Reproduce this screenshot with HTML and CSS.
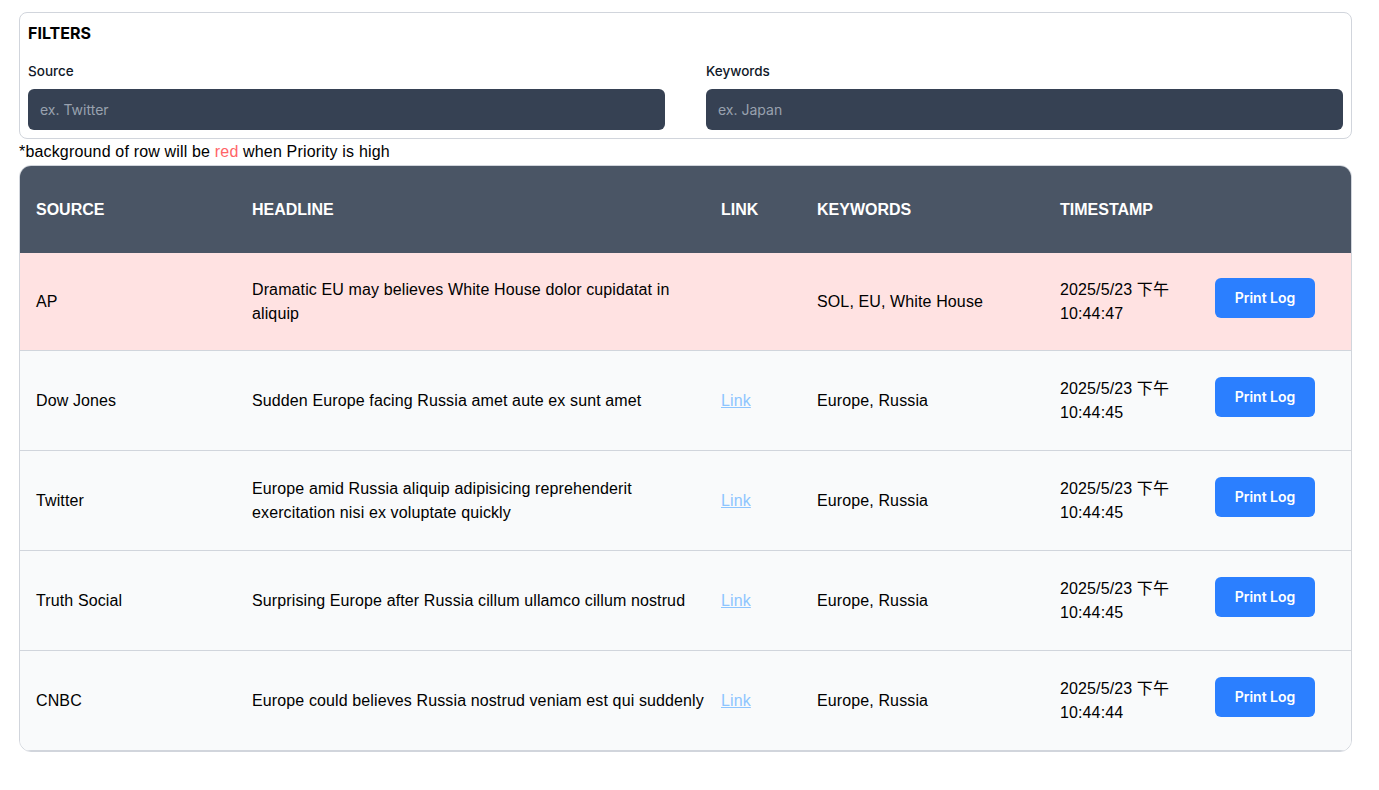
FILE: index.html
```html
<!DOCTYPE html>
<html lang="en">
<head>
<meta charset="utf-8">
<title>News Feed</title>
<link rel="stylesheet" href="styles.css">
</head>
<body>
<div class="page">
  <section class="filters">
    <h2 class="filters-title">FILTERS</h2>
    <div class="filters-grid">
      <div class="field">
        <label class="field-label">Source</label>
        <input class="field-input" type="text" placeholder="ex. Twitter">
      </div>
      <div class="field">
        <label class="field-label">Keywords</label>
        <input class="field-input" type="text" placeholder="ex. Japan">
      </div>
    </div>
  </section>
  <p class="note">*background of row will be <span class="note-red">red</span> when Priority is high</p>
  <div class="table-wrap">
    <table class="news">
      <thead>
        <tr>
          <th class="c-source">SOURCE</th>
          <th class="c-headline">HEADLINE</th>
          <th class="c-link">LINK</th>
          <th class="c-keywords">KEYWORDS</th>
          <th class="c-time">TIMESTAMP</th>
          <th class="c-action"></th>
        </tr>
      </thead>
      <tbody>
        <tr class="row high">
          <td>AP</td>
          <td class="headline">Dramatic EU may believes White House dolor cupidatat in aliquip</td>
          <td></td>
          <td>SOL, EU, White House</td>
          <td>2025/5/23 下午 10:44:47</td>
          <td><button class="btn">Print Log</button></td>
        </tr>
        <tr class="row">
          <td>Dow Jones</td>
          <td class="headline">Sudden Europe facing Russia amet aute ex sunt amet</td>
          <td><a class="link" href="#">Link</a></td>
          <td>Europe, Russia</td>
          <td>2025/5/23 下午 10:44:45</td>
          <td><button class="btn">Print Log</button></td>
        </tr>
        <tr class="row">
          <td>Twitter</td>
          <td class="headline">Europe amid Russia aliquip adipisicing reprehenderit exercitation nisi ex voluptate quickly</td>
          <td><a class="link" href="#">Link</a></td>
          <td>Europe, Russia</td>
          <td>2025/5/23 下午 10:44:45</td>
          <td><button class="btn">Print Log</button></td>
        </tr>
        <tr class="row">
          <td>Truth Social</td>
          <td class="headline">Surprising Europe after Russia cillum ullamco cillum nostrud</td>
          <td><a class="link" href="#">Link</a></td>
          <td>Europe, Russia</td>
          <td>2025/5/23 下午 10:44:45</td>
          <td><button class="btn">Print Log</button></td>
        </tr>
        <tr class="row">
          <td>CNBC</td>
          <td class="headline">Europe could believes Russia nostrud veniam est qui suddenly</td>
          <td><a class="link" href="#">Link</a></td>
          <td>Europe, Russia</td>
          <td>2025/5/23 下午 10:44:44</td>
          <td><button class="btn">Print Log</button></td>
        </tr>
      </tbody>
    </table>
  </div>
</div>
</body>
</html>
```

FILE: styles.css
```css
* { box-sizing: border-box; }

html, body {
  margin: 0;
  padding: 0;
  background: #ffffff;
}

body {
  font-family: "Liberation Sans", Arial, "Noto Sans CJK SC", sans-serif;
  color: #000000;
}

.page {
  padding: 12px 27px 0 19px;
}

.filters {
  border: 1px solid #d1d5dc;
  border-radius: 8px;
  padding: 8px;
}

.filters-title {
  margin: 0;
  font-family: Inter, "Liberation Sans", sans-serif;
  font-size: 16px;
  line-height: 24px;
  font-weight: 700;
  color: #000;
}

.filters-grid {
  display: grid;
  grid-template-columns: 1fr 1fr;
  column-gap: 41px;
  margin-top: 16px;
}

.field {
  display: flex;
  flex-direction: column;
}

.field-label {
  font-family: Inter, "Liberation Sans", sans-serif;
  font-size: 13.5px;
  line-height: 20px;
  font-weight: 500;
  color: #101828;
}

.field-input {
  margin-top: 8px;
  height: 41px;
  border: none;
  border-radius: 6px;
  background: #364153;
  padding: 0 12px;
  font-family: Inter, "Liberation Sans", sans-serif;
  font-size: 14px;
  color: #ffffff;
  outline: none;
}

.field-input::placeholder {
  color: #99a1af;
}

.note {
  margin: 0;
  font-size: 16px;
  line-height: 26px;
  letter-spacing: 0.17px;
  color: #000;
}

.note-red {
  color: #ff6467;
}

.table-wrap {
  border: 1px solid #d1d5dc;
  border-radius: 12px;
  overflow: hidden;
}

.news {
  width: 100%;
  table-layout: fixed;
  border-collapse: separate;
  border-spacing: 0;
}

.news th {
  height: 87px;
  background: #4a5565;
  color: #ffffff;
  text-align: left;
  font-size: 16px;
  font-weight: 700;
  padding: 0 16px;
  vertical-align: middle;
}

.c-source { width: 216px; }
.c-headline { width: 469px; }
.c-link { width: 96px; }
.c-keywords { width: 243px; }
.c-time { width: 155px; }

.news td {
  height: 100px;
  padding: 0 16px;
  font-size: 16px;
  line-height: 24px;
  letter-spacing: 0.12px;
  vertical-align: middle;
  border-bottom: 1px solid #d1d5dc;
  background: #f9fafb;
}

.news td.headline {
  padding-right: 0;
}

.news tbody tr:first-child td {
  height: 98px;
}

.row.high td {
  background: #ffe2e2;
}

.link {
  color: #8ec5ff;
  text-decoration: underline;
}

.btn {
  display: block;
  width: 100px;
  height: 40px;
  margin-bottom: 8px;
  border: none;
  border-radius: 6px;
  background: #2b7fff;
  color: #ffffff;
  font-family: Inter, "Liberation Sans", sans-serif;
  font-size: 14px;
  font-weight: 600;
  letter-spacing: 0;
  cursor: pointer;
}
```
